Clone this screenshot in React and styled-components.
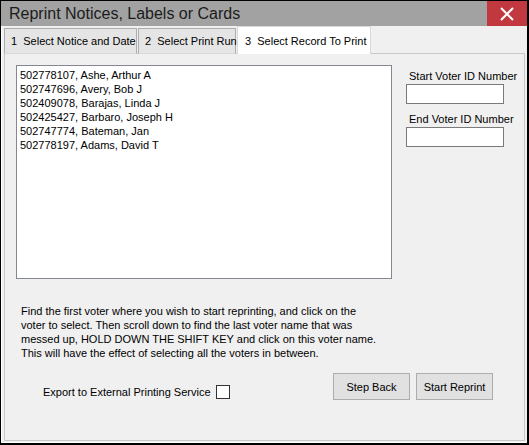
import React, { useState } from 'react';
import styled, { createGlobalStyle } from 'styled-components';

const GlobalStyle = createGlobalStyle`
  html, body {
    margin: 0;
    padding: 0;
    background: #ffffff;
  }
  * {
    box-sizing: border-box;
  }
`;

const voters = [
  '502778107, Ashe, Arthur A',
  '502747696, Avery, Bob J',
  '502409078, Barajas, Linda J',
  '502425427, Barbaro, Joseph H',
  '502747774, Bateman, Jan',
  '502778197, Adams, David T',
];

const tabs = [
  { label: '1  Select Notice and Date', width: 133 },
  { label: '2  Select Print Run', width: 98 },
  { label: '3  Select Record To Print', width: 134 },
];

function App() {
  const [active, setActive] = useState(2);
  const [selected, setSelected] = useState(-1);
  const [exportIt, setExportIt] = useState(false);

  return (
    <>
      <GlobalStyle />
      <Window>
        <TitleBar>
          <Title>Reprint Notices, Labels or Cards</Title>
          <CloseButton>
            <svg width="14" height="14" viewBox="0 0 14 14">
              <path d="M1 1 L13 13 M13 1 L1 13" stroke="#fff" strokeWidth="2" />
            </svg>
          </CloseButton>
        </TitleBar>

        <Body>
          <TabStrip>
            {tabs.map((t, i) => (
              <Tab key={i} width={t.width} active={i === active} onClick={() => setActive(i)}>
                {t.label}
              </Tab>
            ))}
          </TabStrip>

          <Panel>
            <TopRow>
              <ListBox>
                {voters.map((v, i) => (
                  <ListItem key={i} selected={i === selected} onClick={() => setSelected(i)}>
                    {v}
                  </ListItem>
                ))}
              </ListBox>

              <SideColumn>
                <FieldLabel>Start Voter ID Number</FieldLabel>
                <TextBox />
                <FieldLabel second>End Voter ID Number</FieldLabel>
                <TextBox />
              </SideColumn>
            </TopRow>

            <Instructions>
              Find the first voter where you wish to start reprinting, and click on the
              <br />
              voter to select. Then scroll down to find the last voter name that was
              <br />
              messed up, HOLD DOWN THE SHIFT KEY and click on this voter name.
              <br />
              This will have the effect of selecting all the voters in between.
            </Instructions>

            <BottomRow>
              <CheckLabel onClick={() => setExportIt(!exportIt)}>
                Export to External Printing Service
                <CheckBox>{exportIt ? '✓' : ''}</CheckBox>
              </CheckLabel>
              <Buttons>
                <Button>Step Back</Button>
                <Button>Start Reprint</Button>
              </Buttons>
            </BottomRow>
          </Panel>
        </Body>
      </Window>
    </>
  );
}

export default App;

const Window = styled.div`
  width: 529px;
  height: 445px;
  display: flex;
  flex-direction: column;
  border: 1px solid #000;
  border-right-width: 2px;
  border-bottom-width: 2px;
  font-family: "Liberation Sans", Arial, sans-serif;
  font-size: 11px;
  color: #000;
  background: #f0f0f0;
`;

const TitleBar = styled.div`
  height: 25px;
  display: flex;
  align-items: center;
  justify-content: space-between;
  background: #a2a2a2;
`;

const Title = styled.div`
  font-size: 16px;
  color: #1b1b1b;
  padding-left: 8px;
  line-height: 25px;
`;

const CloseButton = styled.div`
  width: 40px;
  height: 25px;
  background: #c1393f;
  display: flex;
  align-items: center;
  justify-content: center;
`;

const Body = styled.div`
  flex: 1;
  display: flex;
  flex-direction: column;
  padding: 0 2px 1px 0;
  border-left: 1px solid #fff;
  border-bottom: 1px solid #fff;
`;

const TabStrip = styled.div`
  height: 28px;
  display: flex;
  align-items: flex-end;
  padding-left: 2px;
`;

const Tab = styled.div`
  width: ${p => p.width}px;
  height: ${p => (p.active ? 28 : 26)}px;
  padding-left: ${p => (p.active ? 7 : 6)}px;
  display: flex;
  align-items: center;
  white-space: pre;
  background: ${p => (p.active ? '#ffffff' : '#e5e5e5')};
  border: 1px solid ${p => (p.active ? '#d9d9d9' : '#adadad')};
  border-bottom: ${p => (p.active ? 'none' : '1px solid #d9d9d9')};
  margin-right: ${p => (p.active ? 0 : 1)}px;
  position: relative;
  z-index: ${p => (p.active ? 1 : 0)};
  cursor: default;
`;

const Panel = styled.div`
  flex: 1;
  margin-left: 2px;
  margin-top: -1px;
  border: 1px solid #c8c8c8;
  background: #f0f0f0;
  display: flex;
  flex-direction: column;
  padding: 11px 0 0 11px;
`;

const TopRow = styled.div`
  display: flex;
  align-items: flex-start;
`;

const ListBox = styled.div`
  width: 376px;
  height: 214px;
  background: #fff;
  border: 1px solid #828790;
  padding: 2px 0 0 3px;
`;

const ListItem = styled.div`
  height: 14px;
  line-height: 14px;
  white-space: nowrap;
  background: ${p => (p.selected ? '#0078d7' : 'transparent')};
  color: ${p => (p.selected ? '#fff' : '#000')};
`;

const SideColumn = styled.div`
  display: flex;
  flex-direction: column;
  margin-left: 14px;
  padding-top: 4px;
`;

const FieldLabel = styled.div`
  padding-left: 3px;
  line-height: 14px;
  margin-top: ${p => (p.second ? 8 : 0)}px;
  margin-bottom: 1px;
  white-space: nowrap;
`;

const TextBox = styled.div`
  width: 98px;
  height: 20px;
  background: #fff;
  border: 1px solid #7a7a7a;
`;

const Instructions = styled.div`
  margin-top: 25px;
  padding-left: 5px;
  line-height: 14px;
  white-space: nowrap;
`;

const BottomRow = styled.div`
  display: flex;
  align-items: center;
  justify-content: space-between;
  margin-top: 13px;
  padding-right: 31px;
`;

const CheckLabel = styled.div`
  display: flex;
  align-items: center;
  padding-left: 27px;
  margin-top: 11px;
  cursor: default;
`;

const CheckBox = styled.div`
  width: 14px;
  height: 14px;
  margin-left: 5px;
  background: #fff;
  border: 1px solid #333;
  font-size: 11px;
  line-height: 12px;
  text-align: center;
`;

const Buttons = styled.div`
  display: flex;
  gap: 6px;
`;

const Button = styled.div`
  width: 77px;
  height: 27px;
  display: flex;
  align-items: center;
  justify-content: center;
  background: #e1e1e1;
  border: 1px solid #adadad;
  cursor: default;
`;
